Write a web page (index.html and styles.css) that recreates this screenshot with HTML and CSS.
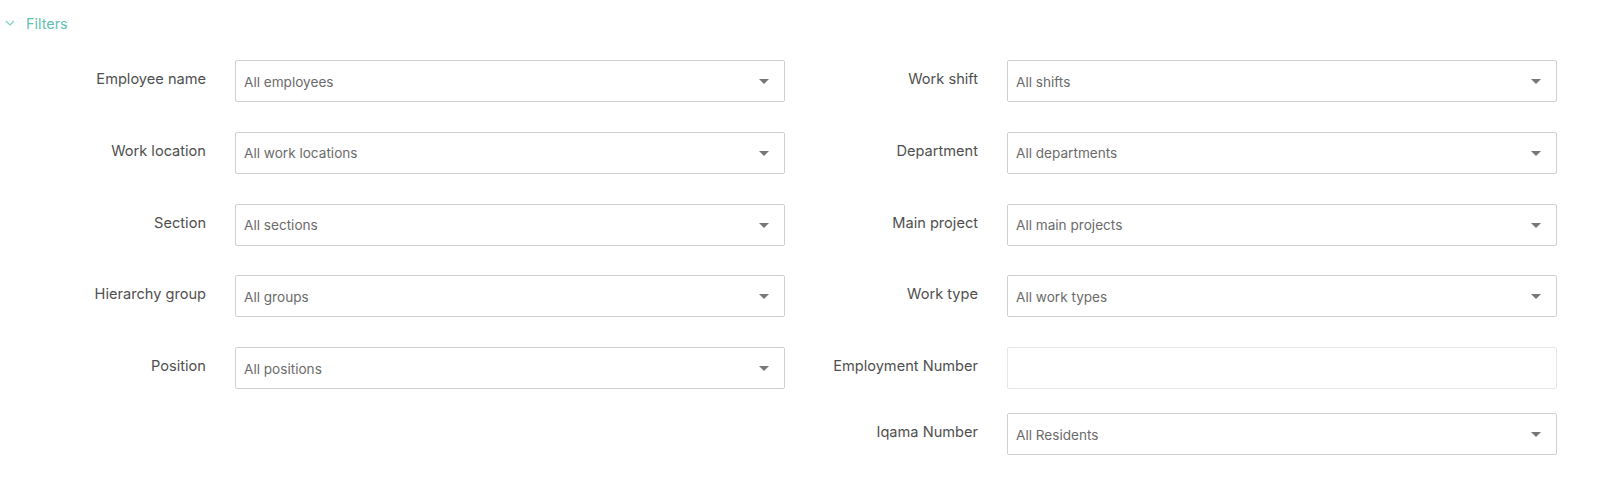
FILE: index.html
```html
<!DOCTYPE html>
<html>
<head>
<meta charset="utf-8">
<link rel="stylesheet" href="styles.css">
</head>
<body>
<div class="filters">
  <div class="filters-head">
    <svg class="chev" width="10" height="6" viewBox="0 0 10 6"><path d="M1 1 L5 5 L9 1" fill="none" stroke="#7fcfc3" stroke-width="1.2"/></svg>
    <span>Filters</span>
  </div>
  <div class="grid">
    <div class="col">
      <div class="row"><label>Employee name</label><div class="select"><span>All employees</span><i class="caret"></i></div></div>
      <div class="row"><label>Work location</label><div class="select"><span>All work locations</span><i class="caret"></i></div></div>
      <div class="row"><label>Section</label><div class="select"><span>All sections</span><i class="caret"></i></div></div>
      <div class="row"><label>Hierarchy group</label><div class="select"><span>All groups</span><i class="caret"></i></div></div>
      <div class="row"><label>Position</label><div class="select"><span>All positions</span><i class="caret"></i></div></div>
    </div>
    <div class="col">
      <div class="row"><label>Work shift</label><div class="select"><span>All shifts</span><i class="caret"></i></div></div>
      <div class="row"><label>Department</label><div class="select"><span>All departments</span><i class="caret"></i></div></div>
      <div class="row"><label>Main project</label><div class="select"><span>All main projects</span><i class="caret"></i></div></div>
      <div class="row"><label>Work type</label><div class="select"><span>All work types</span><i class="caret"></i></div></div>
      <div class="row short"><label>Employment Number</label><div class="input"></div></div>
      <div class="row"><label>Iqama Number</label><div class="select"><span>All Residents</span><i class="caret"></i></div></div>
    </div>
  </div>
</div>
</body>
</html>
```
FILE: styles.css
```css
html, body {
  margin: 0;
  padding: 0;
  background: #fff;
  font-family: Inter, "Noto Sans", "Liberation Sans", sans-serif;
  font-size: 14px;
}
.filters {
  padding: 13px 0 0 0;
}
.filters-head {
  display: flex;
  align-items: center;
  height: 20px;
  padding-left: 5px;
  color: #5fc1b3;
  font-size: 14.4px;
}
.filters-head .chev {
  margin-right: 11px;
}
.grid {
  display: grid;
  grid-template-columns: 772px 772px;
  padding-left: 13px;
  margin-top: 27px;
}
.row {
  display: flex;
  align-items: flex-start;
  height: 42px;
  margin-bottom: 29.75px;
}
.row.short {
  margin-bottom: 24px;
}
.row label {
  width: 193px;
  flex: none;
  text-align: right;
  padding-top: 10px;
  line-height: 18px;
  margin-right: 29px;
  color: #4f4f4f;
  font-size: 14.6px;
}
.select, .input {
  box-sizing: border-box;
  width: 550px;
  height: 42px;
  border: 1px solid #cfcfcf;
  border-radius: 2px;
  display: flex;
  align-items: center;
  padding: 1px 15px 0 8px;
  color: #6b6b6b;
  font-size: 13.6px;
}
.input {
  border-color: #e6e6e6;
}
.select span {
  flex: 1;
}
.caret {
  width: 0;
  height: 0;
  border-left: 5px solid transparent;
  border-right: 5px solid transparent;
  border-top: 5px solid #777;
}
```
